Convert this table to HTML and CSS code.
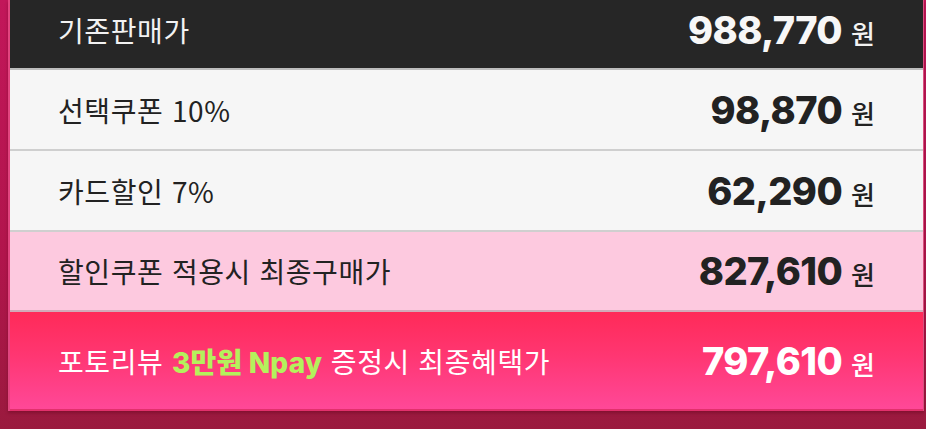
FILE: index.html
```html
<!DOCTYPE html>
<html lang="ko">
<head>
<meta charset="utf-8">
<link rel="stylesheet" href="styles.css">
</head>
<body>
<div class="page">
  <div class="table">
    <div class="row row-dark">
      <span class="label">기존판매가</span>
      <span class="price"><b>988,770</b><i>원</i></span>
    </div>
    <div class="row row-light">
      <span class="label">선택쿠폰 10%</span>
      <span class="price"><b>98,870</b><i>원</i></span>
    </div>
    <div class="row row-light">
      <span class="label">카드할인 7%</span>
      <span class="price"><b>62,290</b><i>원</i></span>
    </div>
    <div class="row row-pink">
      <span class="label">할인쿠폰 적용시 최종구매가</span>
      <span class="price"><b>827,610</b><i>원</i></span>
    </div>
    <div class="row row-hot">
      <span class="label">포토리뷰 <em>3만원 Npay</em> 증정시 최종혜택가</span>
      <span class="price"><b>797,610</b><i>원</i></span>
    </div>
  </div>
</div>
</body>
</html>
```

FILE: styles.css
```css
html, body {
  margin: 0;
  padding: 0;
}
body {
  width: 926px;
  height: 429px;
  overflow: hidden;
  background: linear-gradient(180deg, #c2175a 0%, #b1154c 60%, #9a1a3e 100%);
  font-family: "Noto Sans CJK KR", "Noto Sans", sans-serif;
}
.page {
  padding: 0 2px 0 8px;
}
.table {
  display: flex;
  flex-direction: column;
  border-left: 2px solid #e2457f;
  border-right: 1px solid #d9507f;
  box-shadow: 0 2px 3px rgba(80, 0, 20, 0.35);
}
.row {
  display: flex;
  align-items: center;
  justify-content: space-between;
  padding: 0 48px 0 48px;
  box-sizing: border-box;
}
.label {
  font-size: 28px;
  font-weight: 400;
  letter-spacing: 0.6px;
}
.price {
  display: flex;
  align-items: baseline;
  gap: 9px;
}
.price b {
  font-family: "Inter", "Noto Sans", sans-serif;
  font-weight: 800;
  font-size: 38px;
  letter-spacing: -0.6px;
}
.price i {
  font-style: normal;
  font-size: 26px;
  font-weight: 500;
}
.row-dark {
  height: 70px;
  padding-bottom: 9px;
  background: #262626;
  color: #f2f2f2;
  border-bottom: 2px solid #bdbdbd;
}
.row-dark .price b {
  color: #f7f7f7;
}
.row-light {
  height: 81px;
  background: #f6f6f6;
  color: #222;
  border-bottom: 2px solid #cfcfcf;
}
.row-pink {
  height: 80px;
  background: #fdc9df;
  color: #222;
  border-bottom: 2px solid #d2a9b8;
}
.row-hot {
  height: 99px;
  background: linear-gradient(180deg, #ff2a58 0%, #ff3672 45%, #ff4898 100%);
  color: #ffffff;
  border-bottom: 2px solid #e3306c;
}
.row-hot em {
  font-style: normal;
  font-weight: 800;
  color: #b4f15c;
  font-family: "Inter", "Noto Sans CJK KR", sans-serif;
  letter-spacing: 0.2px;
}
.row-hot .price b {
  color: #fff;
}
```
